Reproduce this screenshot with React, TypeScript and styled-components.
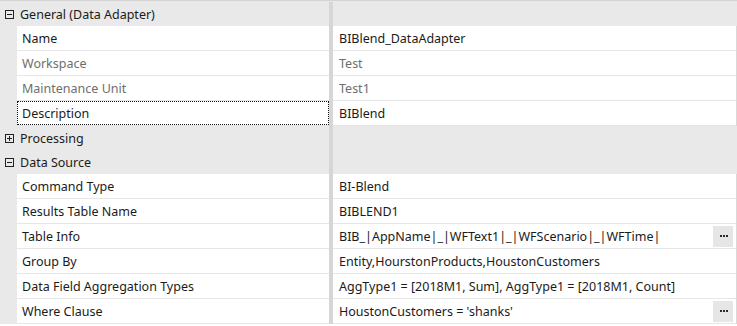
import React from "react";
import styled, { createGlobalStyle } from "styled-components";

const Global = createGlobalStyle`
  html, body { margin: 0; padding: 0; background: #ffffff; }
  body { font-family: "Segoe UI", "Noto Sans", sans-serif; }
`;

const Grid = styled.div`
  width: 737px;
  border-top: 1px solid #d3d3d3;
  padding-top: 1px;
  background: #e9e9e9;
  font-size: 12.5px;
  color: #1b1b1b;
`;

const HeaderRow = styled.div<{ $h: number }>`
  display: grid;
  grid-template-columns: 329px 4px 1fr;
  height: ${(p) => p.$h}px;
  background: #e9e9e9;
`;

const HeaderLabel = styled.div`
  display: flex;
  align-items: center;
  gap: 6px;
  padding-left: 5px;
  white-space: nowrap;
`;

const Toggle = styled.span<{ $open: boolean }>`
  position: relative;
  width: 9px;
  height: 9px;
  box-sizing: border-box;
  border: 1px solid #222;
  flex: none;
  &::before {
    content: "";
    position: absolute;
    left: 1px;
    right: 1px;
    top: 3px;
    height: 1px;
    background: #222;
  }
  &::after {
    content: "";
    position: absolute;
    top: 1px;
    bottom: 1px;
    left: 3px;
    width: 1px;
    background: #222;
    display: ${(p) => (p.$open ? "none" : "block")};
  }
`;

const Splitter = styled.div`
  background: #d6d6d6;
`;

const DataRow = styled.div`
  display: grid;
  grid-template-columns: 17px 312px 4px 1fr 1px;
  height: 25px;
`;

const Gutter = styled.div`
  background: #e9e9e9;
`;

const Cell = styled.div<{ $muted?: boolean; $focus?: boolean }>`
  position: relative;
  display: flex;
  align-items: center;
  background: #ffffff;
  border-bottom: 1px solid #e6e6e6;
  color: ${(p) => (p.$muted ? "#6e6e6e" : "#1b1b1b")};
  white-space: nowrap;
  overflow: hidden;
  &::after {
    content: "";
    position: absolute;
    left: 0;
    right: 0;
    top: 0;
    bottom: 0;
    border: 1px dotted #111;
    display: ${(p) => (p.$focus ? "block" : "none")};
  }
`;

const LabelCell = styled(Cell)`
  padding-left: 5px;
`;

const ValueCell = styled(Cell)`
  padding-left: 6px;
  padding-right: 3px;
  justify-content: space-between;
`;

const RightEdge = styled.div`
  background: #d9d9d9;
`;

const Ellipsis = styled.span`
  width: 20px;
  height: 21px;
  background: #e6e6e6;
  display: flex;
  align-items: center;
  justify-content: center;
  gap: 1px;
  padding-left: 1px;
  box-sizing: border-box;
  flex: none;
`;

const Dot = styled.i`
  width: 2px;
  height: 2px;
  background: #2a2a2a;
`;

type Prop = { label: string; value: string; muted?: boolean; focus?: boolean; button?: boolean };
type Group = { title: string; open: boolean; h: number; props: Prop[] };

const groups: Group[] = [
  {
    title: "General (Data Adapter)",
    open: true,
    h: 24,
    props: [
      { label: "Name", value: "BIBlend_DataAdapter" },
      { label: "Workspace", value: "Test", muted: true },
      { label: "Maintenance Unit", value: "Test1", muted: true },
      { label: "Description", value: "BIBlend", focus: true },
    ],
  },
  { title: "Processing", open: false, h: 24, props: [] },
  {
    title: "Data Source",
    open: true,
    h: 24,
    props: [
      { label: "Command Type", value: "BI-Blend" },
      { label: "Results Table Name", value: "BIBLEND1" },
      { label: "Table Info", value: "BIB_|AppName|_|WFText1|_|WFScenario|_|WFTime|", button: true },
      { label: "Group By", value: "Entity,HourstonProducts,HoustonCustomers" },
      { label: "Data Field Aggregation Types", value: "AggType1 = [2018M1, Sum], AggType1 = [2018M1, Count]" },
      { label: "Where Clause", value: "HoustonCustomers = 'shanks'", button: true },
    ],
  },
];

export default function App() {
  return (
    <>
      <Global />
      <Grid>
        {groups.map((g) => (
          <React.Fragment key={g.title}>
            <HeaderRow $h={g.h}>
              <HeaderLabel>
                <Toggle $open={g.open} />
                {g.title}
              </HeaderLabel>
              <Splitter />
              <div />
            </HeaderRow>
            {g.props.map((p) => (
              <DataRow key={p.label}>
                <Gutter />
                <LabelCell $muted={p.muted} $focus={p.focus}>
                  {p.label}
                </LabelCell>
                <Splitter />
                <ValueCell $muted={p.muted}>
                  <span>{p.value}</span>
                  {p.button && (
                    <Ellipsis aria-label="...">
                      <Dot />
                      <Dot />
                      <Dot />
                    </Ellipsis>
                  )}
                </ValueCell>
                <RightEdge />
              </DataRow>
            ))}
          </React.Fragment>
        ))}
      </Grid>
    </>
  );
}
